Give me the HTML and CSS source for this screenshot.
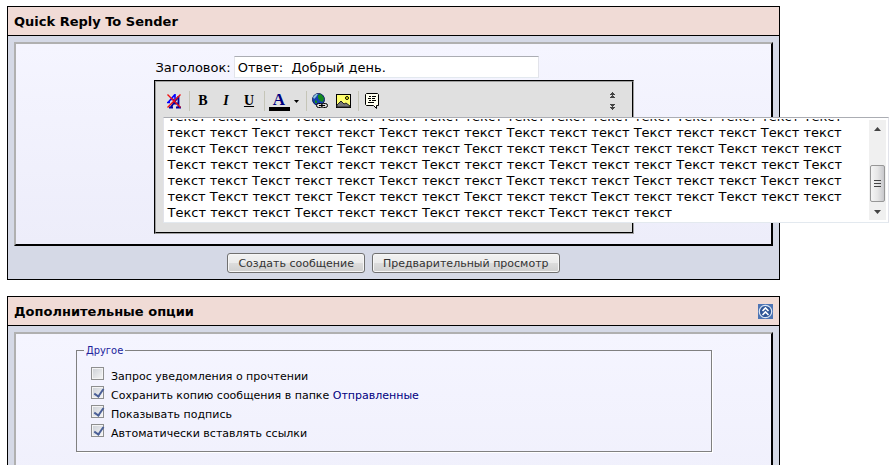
FILE: index.html
```html
<!DOCTYPE html>
<html lang="ru">
<head>
  <meta charset="UTF-8" />
  <meta name="viewport" content="width=device-width, initial-scale=1.0"/>
  <title>Quick Reply To Sender</title>
  <link rel="stylesheet" href="styles.css">
</head>
<body>

  <form class="page" onsubmit="return false">

    <section class="panel">
      <h2 class="panel-head">Quick Reply To Sender</h2>
      <div class="panel-body">
        <div class="inset">
          <div class="compose">
            <div class="subject">
              <label for="subject">Заголовок:</label>
              <input type="text" id="subject" class="subject-input" value="Ответ:  Добрый день." />
            </div>

            <div class="editor">
              <div class="editor-inner">
                <div class="toolbar">
                  <button type="button" class="tool" aria-label="Убрать форматирование">
                    <svg width="16" height="16" viewBox="0 0 16 16">
                      <path d="M1 9.500 H4 M2.500 9 L8.500 2 M9 1 V7 M4 6.500 H8" fill="none" stroke="#0000ff" stroke-width="1.600"/>
                      <path d="M3 14.500 H7 M10 14.500 H15 M5 14 L12 4 M12.500 3 V14 M7 10.500 H12" fill="none" stroke="#0000a0" stroke-width="1.800"/>
                      <path d="M1.500 1.500 L14.500 14.500 M14.500 1.500 L1.500 14.500" fill="none" stroke="#f01010" stroke-width="1.400"/>
                    </svg>
                  </button>
                  <span class="sep"></span>
                  <button type="button" class="tool bold" aria-label="Жирный">B</button>
                  <button type="button" class="tool italic" aria-label="Курсив">I</button>
                  <button type="button" class="tool underline" aria-label="Подчёркнутый">U</button>
                  <span class="sep"></span>
                  <button type="button" class="tool color" aria-label="Цвет">A</button>
                  <button type="button" class="tool drop" aria-label="Выбрать цвет">
                    <svg width="5" height="3" viewBox="0 0 5 3"><path d="M0 0 H5 L2.500 3 Z" fill="#000"/></svg>
                  </button>
                  <span class="sep"></span>
                  <button type="button" class="tool" aria-label="Вставить ссылку">
                    <svg width="16" height="16" viewBox="0 0 16 16">
                      <circle cx="6.500" cy="6.500" r="6" fill="#1540b0" stroke="#102060"/>
                      <path d="M1 4 L4 1 L6 1 L4 4 L2 6 Z" fill="#8fc4dc"/>
                      <path d="M6 2 L9 1 L12 5 L11 9 L8 8 L6 5 Z M3 7 L5 8 L5 10 L3 10 Z" fill="#148a1e"/>
                      <rect x="4.500" y="10.500" width="6" height="4" rx="2" fill="#d8d8d8" stroke="#000"/>
                      <rect x="9.500" y="10.500" width="6" height="4" rx="2" fill="#d8d8d8" stroke="#000"/>
                      <path d="M7 12.500 H13" stroke="#000"/>
                    </svg>
                  </button>
                  <button type="button" class="tool" aria-label="Вставить изображение">
                    <svg width="15" height="16" viewBox="0 0 15 16">
                      <rect x="0.500" y="1.500" width="14" height="13" fill="#ffff70" stroke="#000"/>
                      <circle cx="11" cy="5" r="1.500" fill="#ffff00" stroke="#000"/>
                      <path d="M1 14 V12 L5 8 L8 11 L10 10 L14 13 V14 Z" fill="#777" stroke="#222"/>
                    </svg>
                  </button>
                  <span class="sep"></span>
                  <button type="button" class="tool" aria-label="Цитата">
                    <svg width="14" height="16" viewBox="0 0 14 16">
                      <path d="M1.500 0.500 H12.500 L13.500 1.500 V12.500 H11.500 V15.500 L8.500 12.500 H1.500 L0.500 11.500 V1.500 Z" fill="#fffff0" stroke="#000"/>
                      <path d="M4 3.500 H6 M7 3.500 H11 M3 5.500 H6 M7 5.500 H10 M4 7.500 H6 M7 7.500 H11 M3 9.500 H9" stroke="#000"/>
                    </svg>
                  </button>
                  <div class="resize">
                    <button type="button" aria-label="Уменьшить">
                      <svg width="5" height="6" viewBox="0 0 5 6" shape-rendering="crispEdges"><path d="M2 0 H3 V1 H4 V2 H5 V3 H3 V4 H4 V5 H5 V6 H0 V5 H1 V4 H2 V3 H0 V2 H1 V1 H2 Z" fill="#444"/></svg>
                    </button>
                    <button type="button" aria-label="Увеличить">
                      <svg width="5" height="6" viewBox="0 0 5 6" shape-rendering="crispEdges"><path d="M2 6 H3 V5 H4 V4 H5 V3 H3 V2 H4 V1 H5 V0 H0 V1 H1 V2 H2 V3 H0 V4 H1 V5 H2 Z" fill="#444"/></svg>
                    </button>
                  </div>
                </div>

                <div class="message">
                  <textarea id="message" class="message-text" aria-label="Сообщение" spellcheck="false">Текст текст текст Текст текст текст Текст текст текст Текст текст текст Текст текст текст Текст текст текст Текст текст текст Текст текст текст Текст текст текст Текст текст текст Текст текст текст Текст текст текст Текст текст текст Текст текст текст Текст текст текст Текст текст текст Текст текст текст Текст текст текст Текст текст текст Текст текст текст Текст текст текст Текст текст текст Текст текст текст Текст текст текст Текст текст текст Текст текст текст Текст текст текст Текст текст текст Текст текст текст Текст текст текст Текст текст текст Текст текст текст Текст текст текст Текст текст текст Текст текст текст Текст текст текст</textarea>
                  <div class="scrollbar">
                    <svg width="17" height="16" viewBox="0 0 17 16"><path d="M5 11 L8.500 7 L12 11 Z" fill="#444"/></svg>
                    <div class="thumb">
                      <span></span><span></span><span></span>
                    </div>
                    <svg width="17" height="16" viewBox="0 0 17 16"><path d="M5 6 L8.500 10 L12 6 Z" fill="#444"/></svg>
                  </div>
                </div>
              </div>
            </div>
          </div>
        </div>

        <div class="actions">
          <button type="submit" class="btn">Создать сообщение</button>
          <button type="submit" class="btn">Предварительный просмотр</button>
        </div>
      </div>
    </section>

    <section class="panel">
      <h2 class="panel-head">
        Дополнительные опции
        <a href="#options" class="collapse" aria-label="Свернуть">
          <svg width="15" height="15" viewBox="0 0 15 15">
            <rect width="15" height="15" fill="#4d74b4"/>
            <circle cx="7.500" cy="7.500" r="6.200" fill="#2f5597" stroke="#dbe6f5" stroke-width="1.200"/>
            <path d="M4.500 7 L7.500 4 L10.500 7 M4.500 11 L7.500 8 L10.500 11" fill="none" stroke="#fff" stroke-width="1.600"/>
          </svg>
        </a>
      </h2>
      <div class="panel-body" id="options">
        <div class="inset options">
          <fieldset class="group">
            <legend>Другое</legend>
            <div class="option">
              <input type="checkbox" id="receipt" />
              <label for="receipt">Запрос уведомления о прочтении</label>
            </div>
            <div class="option">
              <input type="checkbox" id="savecopy" checked />
              <label for="savecopy">Сохранить копию сообщения в папке <a href="#sent">Отправленные</a></label>
            </div>
            <div class="option">
              <input type="checkbox" id="signature" checked />
              <label for="signature">Показывать подпись</label>
            </div>
            <div class="option">
              <input type="checkbox" id="parseurl" checked />
              <label for="parseurl">Автоматически вставлять ссылки</label>
            </div>
          </fieldset>
        </div>
      </div>
    </section>

  </form>

  <script>
    // keep the end of the message in view
    const message = document.getElementById("message");
    message.scrollTop = message.scrollHeight;
  </script>
</body>
</html>
```
FILE: styles.css
```css
* {
  box-sizing: border-box;
}

html {
  overflow: hidden;
}

body {
  margin: 0;
  background: #fff;
  color: #000;
  font-family: Verdana, "DejaVu Sans", sans-serif;
  font-size: 13px;
}

button,
input,
textarea {
  font-family: inherit;
}

.page {
  margin: 6px 109px 0 7px;
}

.panel {
  border: 1px solid #000;
  margin-bottom: 16px;
}

.panel-head {
  display: flex;
  align-items: center;
  justify-content: space-between;
  height: 29px;
  margin: 0;
  padding: 0 6px;
  background: #f0dbd6;
  border-bottom: 1px solid #000;
  font-size: 13px;
  font-weight: bold;
}

.collapse {
  display: flex;
}

.panel-body {
  padding: 6px;
  background: #d5d9e6;
}

.inset {
  border: 2px solid;
  border-color: #b0b0b0 #000 #000 #b0b0b0;
  background: linear-gradient(#f5f5ff, #ededfa);
  padding: 12px 0 10px;
}

/* message form */
.compose {
  width: 480px;
  margin: 0 auto;
}

.subject {
  display: flex;
  align-items: center;
  gap: 3px;
  margin-bottom: 2px;
}

.subject label {
  padding-left: 2px;
}

.subject-input {
  width: 305px;
  height: 22px;
  padding: 0 3px;
  border: 1px solid;
  border-color: #abadb3 #e2e3ea #e3e9ef #e2e3ea;
  background: #fff;
  font-size: 13px;
  white-space: pre;
}

.editor {
  border: 1px solid;
  border-color: #000 #a0a0a0 #a0a0a0 #000;
}

.editor-inner {
  border: 1px solid;
  border-color: #a0a0a0 #000 #000 #a0a0a0;
  background: #e0e0e0;
  padding: 7px 7px 9px;
}

.toolbar {
  display: flex;
  align-items: center;
  height: 24px;
  margin-bottom: 4px;
}

.tool {
  display: flex;
  align-items: center;
  justify-content: center;
  width: 23px;
  height: 22px;
  padding: 0;
  border: 0;
  background: none;
  color: #000;
  font: bold 14px "Liberation Serif", serif;
}

.italic {
  font-style: italic;
}

.underline {
  text-decoration: underline;
}

.color {
  height: 19px;
  width: 21px;
  margin: 0 1px 0 2px;
  border-bottom: 4px solid #000;
  color: #000080;
  font-size: 17px;
  line-height: 15px;
}

.drop {
  width: 12px;
}

.sep {
  width: 1px;
  height: 20px;
  margin: 0 2px 0 3px;
  background: #c5c5b8;
}

.resize {
  display: flex;
  flex-direction: column;
  gap: 6px;
  margin-left: auto;
  padding-right: 10px;
}

.resize button {
  display: flex;
  padding: 0;
  border: 0;
  background: none;
}

/* the message box is wider than the editor */
.message {
  display: flex;
  width: 726px;
  height: 106px;
  padding: 1px 2px;
  border: 1px solid;
  border-color: #abadb3 #e2e3ea #e3e9ef #e2e3ea;
  background: #fff;
}

.message-text {
  flex: 1;
  padding: 0 2px;
  border: 0;
  outline: 0;
  overflow: hidden;
  resize: none;
  background: none;
  color: #000;
  font-size: 13px;
  line-height: 16px;
}

.scrollbar {
  display: flex;
  flex-direction: column;
  width: 17px;
  margin: 1px 0;
  background: #f0f0f0;
}

.thumb {
  display: flex;
  flex-direction: column;
  align-items: center;
  justify-content: center;
  gap: 2px;
  height: 37px;
  margin: auto 1px 2px;
  border: 1px solid #979797;
  border-radius: 2px;
  background: linear-gradient(to right, #f5f5f5, #e6e6e6 50%, #c8c8cc);
}

.thumb span {
  width: 7px;
  height: 1px;
  background: #444;
}

.actions {
  display: flex;
  justify-content: center;
  gap: 7px;
  padding-top: 7px;
}

.btn {
  height: 20px;
  padding: 0 10px;
  border: 1px solid #707070;
  border-radius: 3px;
  background: linear-gradient(#f2f2f2, #ebebeb 50%, #dddddd 50%, #cfcfcf);
  box-shadow: inset 0 0 0 1px #f6f6f6;
  color: #333;
  font-size: 11px;
}

/* options */
.options {
  padding: 10px 59px 30px 60px;
  background: linear-gradient(#f5f5ff, #f0f0fc);
}

.group {
  margin: 0;
  padding: 7px 14px 11px;
  border: 1px solid #808080;
  box-shadow: 1px 1px 0 #fff;
  font-size: 11px;
}

.group legend {
  margin-left: -7px;
  padding: 0 2px;
  color: #22229c;
  font: 11px Tahoma, "DejaVu Sans Condensed", sans-serif;
}

.option {
  display: flex;
  align-items: center;
  gap: 7px;
  height: 19px;
}

.option label {
  padding-top: 5px;
}

.option a {
  color: #000080;
  text-decoration: none;
}

.option input {
  appearance: none;
  width: 13px;
  height: 13px;
  margin: 0;
  border: 1px solid #8e8f8f;
  background: linear-gradient(135deg, #cbcfd5, #f6f6f6);
  box-shadow: inset 0 0 0 1px #f4f4f4;
}

.option input:checked::before {
  content: "";
  display: block;
  width: 4px;
  height: 8px;
  margin: 0 0 0 4px;
  border: solid #4a5f97;
  border-width: 0 2px 2px 0;
  transform: rotate(35deg);
}
```
